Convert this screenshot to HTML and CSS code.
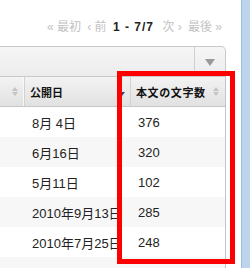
FILE: index.html
```html
<!DOCTYPE html>
<html>
<head>
	<title>一覧</title>
	<link rel="stylesheet" href="styles.css">
</head>
<body>
	<div id="page">
		<div id="main">
			<div class="pager">
				<span class="off">&laquo; 最初</span>
				<span class="off">&lsaquo; 前</span>
				<b class="cur">1 - 7/7</b>
				<span class="off">次 &rsaquo;</span>
				<span class="off">最後 &raquo;</span>
			</div>

			<div class="toolbar">
				<div class="tb-fill"></div>
				<div class="tb-drop"><span class="caret"></span></div>
			</div>

			<div class="grid">
				<div class="row head">
					<div class="c1"><span class="sort"></span></div>
					<div class="c2">公開日<span class="desc"></span></div>
					<div class="c3">本文の文字数<span class="sort"></span></div>
				</div>
				<div class="row">
					<div class="c1"></div><div class="c2">8月 4日</div><div class="c3">376</div>
				</div>
				<div class="row alt">
					<div class="c1"></div><div class="c2">6月16日</div><div class="c3">320</div>
				</div>
				<div class="row">
					<div class="c1"></div><div class="c2">5月11日</div><div class="c3">102</div>
				</div>
				<div class="row alt">
					<div class="c1"></div><div class="c2">2010年9月13日</div><div class="c3">285</div>
				</div>
				<div class="row">
					<div class="c1"></div><div class="c2">2010年7月25日</div><div class="c3">248</div>
				</div>
				<div class="row alt">
					<div class="c1"></div><div class="c2"></div><div class="c3"></div>
				</div>
			</div>

			<!-- marker drawn over the column -->
			<div class="mark"></div>
		</div>
		<div id="side"></div>
	</div>
</body>
</html>
```

FILE: styles.css
```css
html, body { margin: 0; padding: 0; background: #fff; overflow: hidden; }
#page { display: flex; width: 250px; height: 268px; }
#main { position: relative; width: 241px; overflow: hidden; }
#side { width: 8px; background: #bdd4ec; border-left: 1px solid #9dc1e3; }

.pager {
	height: 46px;
	box-sizing: border-box;
	padding: 17px 19px 0 0;
	text-align: right;
	font: 12px "Liberation Sans", "Noto Sans CJK JP", sans-serif;
	white-space: nowrap;
}
.pager span, .pager b { margin-left: 3px; }
.off { color: #c2c2c2; }
.cur { color: #222; font-weight: bold; letter-spacing: 1px; margin-right: 2px; }

.toolbar {
	display: flex;
	width: 226px;
	height: 31px;
	box-sizing: border-box;
	border: 1px solid #c9c9c9;
	border-left: 0;
	border-top-right-radius: 5px;
	background: linear-gradient(#f6f6f6, #ececec);
}
.tb-fill { flex: 1; }
.tb-drop {
	width: 30px;
	border-left: 1px solid #cfcfcf;
	display: flex;
	align-items: center;
	justify-content: center;
}
.caret {
	width: 0; height: 0;
	border-left: 5px solid transparent;
	border-right: 5px solid transparent;
	border-top: 7px solid #9a9a9a;
	margin-top: 2px;
}

.grid { width: 226px; box-sizing: border-box; border-right: 1px solid #c4c4c4; }
.row { display: flex; height: 30px; align-items: center; font: 13px "Liberation Sans", "Noto Sans CJK JP", sans-serif; color: #222; }
.row.alt { background: #f7f7f7; }
.c1 { width: 24px; }
.c2 { width: 106px; padding-left: 8px; box-sizing: border-box; white-space: nowrap; }
.c3 { flex: 1; padding-left: 8px; }

.row.head {
	height: 29px;
	background: linear-gradient(#f3f3f3, #e1e1e1);
	border-bottom: 1px solid #c6c6c6;
	font: bold 11px "Noto Sans CJK JP", sans-serif;
	color: #111;
	align-items: stretch;
}
.head > div { display: flex; align-items: center; box-sizing: border-box; }
.head .c1 { justify-content: flex-end; padding-right: 6px; border-right: 1px solid #d2d2d2; box-shadow: inset -1px 0 #f8f8f8; width: 25px; }
.head .c2 { padding-left: 5px; width: 106px; border-right: 1px solid #d2d2d2; }
.head .c3 { padding-left: 5px; letter-spacing: 0.6px; }

.sort { margin-left: auto; width: 6px; height: 9px; display: flex; flex-direction: column; justify-content: space-between; }
.head .c3 .sort { margin-right: 6px; }
.sort::before, .sort::after { content: ""; width: 0; height: 0; border-left: 3px solid transparent; border-right: 3px solid transparent; }
.sort::before { border-bottom: 4px solid #c4c4c4; }
.sort::after { border-top: 4px solid #c4c4c4; }
.desc {
	margin-left: auto; margin-right: 5px;
	width: 0; height: 0;
	border-left: 3px solid transparent; border-right: 3px solid transparent;
	border-top: 4px solid #2a4a7a;
	margin-top: 4px;
}

.mark {
	position: absolute;
	left: 117px; top: 71px;
	width: 118px; height: 193px;
	box-sizing: border-box;
	border: 5px solid #ff0000;
}
```
